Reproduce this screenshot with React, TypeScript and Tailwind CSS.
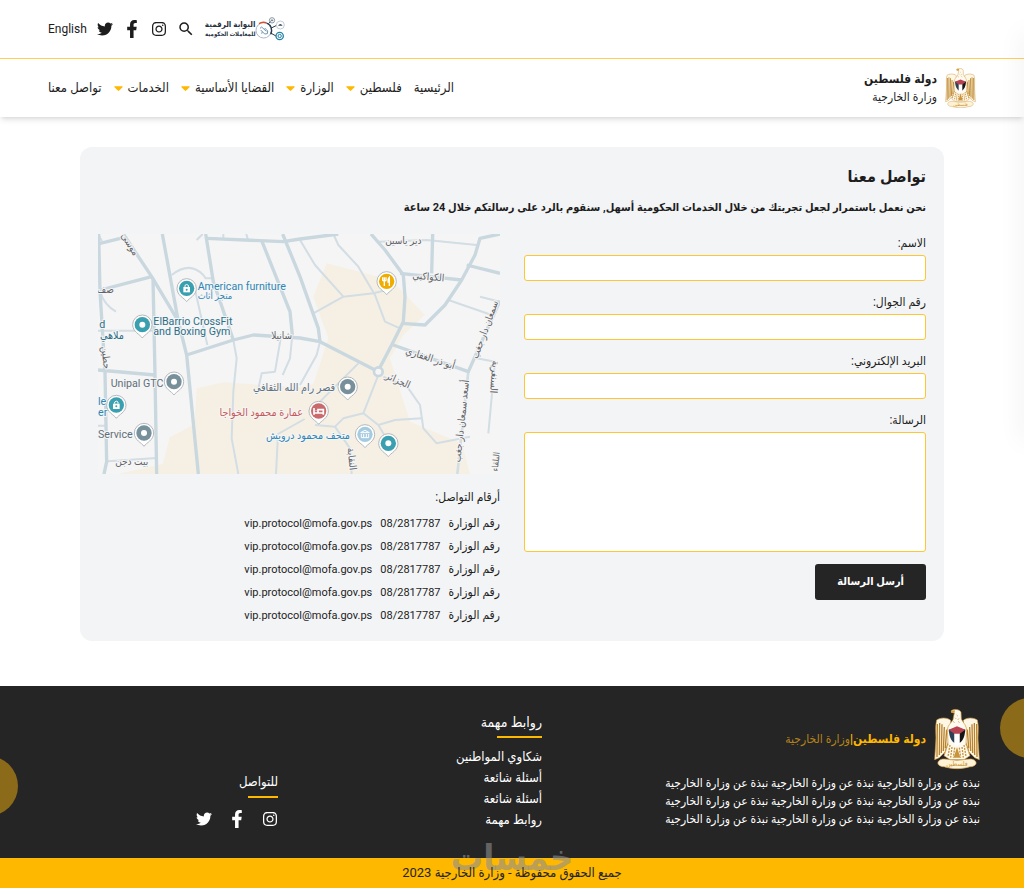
import { FaFacebookF, FaTwitter, FaCaretDown } from "react-icons/fa";
import { FaInstagram } from "react-icons/fa6";
import { MdSearch } from "react-icons/md";

const navLinks = [
  { title: "الرئيسية", menu: false },
  { title: "فلسطين", menu: true },
  { title: "الوزارة", menu: true },
  { title: "القضايا الأساسية", menu: true },
  { title: "الخدمات", menu: true },
  { title: "تواصل معنا", menu: false },
];

const contacts = Array.from({ length: 5 }, () => ({
  title: "رقم الوزارة",
  phone: "08/2817787",
  email: "vip.protocol@mofa.gov.ps",
}));

const footerLinks = ["شكاوي المواطنين", "أسئلة شائعة", "أسئلة شائعة", "روابط مهمة"];

const fields = [
  { id: "name", label: "الاسم:", type: "text" },
  { id: "phone", label: "رقم الجوال:", type: "tel" },
  { id: "email", label: "البريد الإلكتروني:", type: "email" },
];

const Emblem = ({ className }: { className: string }) => (
  <svg viewBox="0 0 138 180" className={className} aria-hidden="true">
    {/* wings */}
    <path
      d="M50 34 C38 24 18 26 8 33 C2 55 8 80 5 105 L2 152 L16 146 L34 128 L44 96 L50 60 Z"
      fill="#fff7e6"
      stroke="#c8943a"
      strokeWidth="2"
    />
    <path
      d="M88 34 C100 24 120 26 130 33 C136 55 130 80 133 105 L136 152 L122 146 L104 128 L94 96 L88 60 Z"
      fill="#fff7e6"
      stroke="#c8943a"
      strokeWidth="2"
    />
    <path
      d="M10 45 L9 144 M17 42 L16 138 M24 46 L22 132 M31 54 L28 126 M38 62 L34 118 M128 45 L129 144 M121 42 L122 138 M114 46 L116 132 M107 54 L110 126 M100 62 L104 118"
      stroke="#b98228"
      strokeWidth="4"
      fill="none"
    />
    {/* head and body */}
    <path
      d="M52 5 C60 -1 78 0 81 10 L82 30 C88 42 98 50 98 64 L96 102 L108 140 L90 152 L48 152 L30 140 L42 102 L40 64 C40 48 52 42 57 32 L61 12 L52 10 Z"
      fill="#fffaf0"
      stroke="#c8943a"
      strokeWidth="2"
    />
    <path d="M52 5 L63 4 L62 11 L52 11 Z" fill="#d99b35" />
    <path d="M68 18 l4 4 m-9 4 l4 4 m8 -2 l-4 5 m-14 4 l5 4 m10 -4 l5 4" stroke="#c8943a" strokeWidth="2" />
    {/* shield */}
    <path d="M44 62 L62 58 L62 102 C52 96 46 84 44 62 Z" fill="#2c4155" />
    <path d="M76 58 L94 62 C92 84 86 96 76 102 Z" fill="#151515" />
    <path d="M61 66 H77 V106 L69 111 L61 106 Z" fill="#fff" />
    <path d="M44 62 L69 52 L94 62 L77 74 H61 Z" fill="#b84350" />
    {/* tail and claws */}
    <path
      d="M42 104 L30 138 M48 108 L42 142 M54 114 L50 146 M96 104 L108 138 M90 108 L96 142 M84 114 L88 146 M62 116 L58 146 M76 116 L80 146"
      stroke="#c8943a"
      strokeWidth="4"
      strokeDasharray="6 3"
    />
    <path d="M69 114 L79 146 H59 Z" fill="#c8943a" />
    <path
      d="M14 156 C24 144 48 154 69 154 C90 154 114 144 124 156 C132 166 118 174 108 173 C82 181 56 181 30 173 C20 174 6 166 14 156 Z"
      fill="#fff2d5"
      stroke="#d0a050"
      strokeWidth="2"
    />
    <text x="69" y="171" textAnchor="middle" fontSize="20" fill="#c8943a">
      فلسطين
    </text>
  </svg>
);

const PortalLogo = () => (
  <a href="#portal" className="flex items-center">
    <svg viewBox="0 0 90 72" className="h-6 w-[30px]" fill="none" aria-hidden="true">
      <circle cx="26" cy="40" r="23" stroke="#a9bac9" strokeWidth="3" />
      <path d="M12 20 A24 24 0 0 1 35 18" stroke="#d8502e" strokeWidth="4" />
      <path d="M35 18 A24 24 0 0 1 47 52" stroke="#26384c" strokeWidth="4" />
      <path d="M15 34 L20 30 L34 43 M17 39 L29 51 L37 50 L38 42 L29 33 M22 44 L20 50" stroke="#6f93ad" strokeWidth="3" />
      <path d="M40 20 L47 14 M49 33 L65 25 M47 48 L63 57" stroke="#26384c" strokeWidth="3" />
      <circle cx="51" cy="10" r="8" stroke="#8a99a6" strokeWidth="3" />
      <path d="M47 10 H55 M51 7 V13" stroke="#44586b" strokeWidth="2" />
      <circle cx="76" cy="24" r="12" stroke="#c5ccd2" strokeWidth="3" />
      <path d="M69 26 Q76 16 83 26 Z" fill="#34495e" />
      <circle cx="74" cy="57" r="11" stroke="#2583a4" strokeWidth="4" />
      <circle cx="74" cy="57" r="5" stroke="#2583a4" strokeWidth="3" />
    </svg>
    <span className="flex flex-col text-[#26323f]">
      <span className="text-[8px] leading-[10px] font-bold">البوابة الرقمية</span>
      <span className="text-[6px] leading-[8px] font-bold">للمعاملات الحكومية</span>
    </span>
  </a>
);

type PinProps = { x: number; y: number; color: string; kind?: "dot" | "bag" | "food" | "bed" | "museum" };

const Pin = ({ x, y, color, kind = "dot" }: PinProps) => (
  <g transform={`translate(${x} ${y})`}>
    <path
      d="M0 38 C-7 27 -29 20 -29 -2 A29 29 0 0 1 29 -2 C29 20 7 27 0 38 Z"
      fill="#fff"
      stroke="#b4b9bd"
      strokeWidth="3"
    />
    <circle cy="-2" r="23" fill={color} />
    {kind === "dot" && <circle cy="-2" r="9" fill="#fff" />}
    {kind === "bag" && (
      <>
        <path d="M-10 -6 H10 V10 H-10 Z" fill="#fff" />
        <path d="M-5 -6 V-11 Q0 -16 5 -11 V-6" fill="none" stroke="#fff" strokeWidth="3" />
        <circle cy="2" r="3" fill={color} />
      </>
    )}
    {kind === "food" && (
      <path d="M-7 -14 V12 M-12 -14 V-5 Q-7 0 -2 -5 V-14 M8 12 V-14 Q2 -8 4 0 H8" stroke="#fff" strokeWidth="4" fill="none" />
    )}
    {kind === "bed" && (
      <path d="M-14 -11 V9 M-14 4 H14 V9 M14 4 V-6 H-2 V2 M-8 -4 v1" stroke="#fff" strokeWidth="5" fill="none" />
    )}
    {kind === "museum" && (
      <path d="M-13 -7 L0 -14 L13 -7 Z M-11 -3 V8 H11 V-3 M-4 -3 V8 M4 -3 V8" stroke="#fff" strokeWidth="3" fill="none" />
    )}
  </g>
);

const Map = () => (
  <svg viewBox="0 0 1206 720" direction="ltr" className="block w-full" role="img" aria-label="خريطة موقع الوزارة">
    <rect width="1206" height="720" fill="#f5f5f5" />
    <path
      d="M686 88 L880 138 L981 243 L916 303 L876 373 L936 563 L1091 628 L1116 720 H60 L195 690 L215 610 L290 570 L296 463 L376 445 L600 460 L646 450 L691 313 L646 188 Z"
      fill="#f6f0e4"
    />
    {/* side streets */}
    <g fill="none" stroke="#d2dde4" strokeWidth="6" strokeLinejoin="round">
      <path d="M221 123 Q275 80 316 123 L323 133 H346" />
      <path d="M288 153 L328 333" />
      <path d="M0 290 H166 M0 575 H22 M30 682 L176 672 M0 0 L12 22 M6 173 Q20 215 54 233" />
      <path d="M314 0 L296 18 M376 0 V15 M445 0 L450 18" />
      <path d="M406 318 L416 373 L406 473 L401 613 L421 720" />
      <path d="M548 313 L531 413 L491 418 L480 470 M583 303 L576 373 L554 423" />
      <path d="M606 18 L651 93 L736 188 L826 178 L866 168" />
      <path d="M706 0 L721 33 L781 98 L831 183 L861 263 L906 283" />
      <path d="M736 188 L646 238 M666 323 L656 363 L606 453" />
      <path d="M841 23 L986 18 L1136 33" />
      <path d="M1051 198 L1181 243 M1146 188 L1206 203 M1136 373 L1191 383 L1171 598" />
      <path d="M841 423 L796 538 L736 553 L711 578 L651 573 M796 538 L841 573 L871 623 M841 573 L891 558 L971 553" />
      <path d="M856 428 L931 463 L966 513 L976 583 L1016 628 L1116 608" />
      <path d="M781 388 L666 503 M711 578 L756 643 L761 720 M620 555 L540 600 L534 720" />
      <path d="M1111 413 L1078 720" strokeWidth="8" />
    </g>
    {/* main streets */}
    <g fill="none" stroke="#c9d7df" strokeWidth="10" strokeLinejoin="round">
      <path d="M76 0 L161 128 L240 260" />
      <path d="M193 0 L241 263 L266 363 L301 720" />
      <path d="M0 30 L76 11 M0 170 L161 128" />
      <path d="M2 0 L6 173 L21 413 L26 683 L18 720" />
      <path d="M165 133 L171 423 L176 720" />
      <path d="M0 408 L171 423" />
      <path d="M323 0 L346 143 L406 318" />
      <path d="M326 13 L556 23 L606 15 L721 0" />
      <path d="M266 363 L406 318 L466 303 L606 312 L666 323 L831 408" />
      <path d="M491 20 L576 233 L583 303" />
      <path d="M554 0 L606 128 L661 283 L666 323" />
      <path d="M819 0 L861 48 L916 123 L921 188 L916 263 L881 333 L846 400" />
      <path d="M1004 0 L1001 118 M906 118 L1091 138" />
      <path d="M1206 0 L1146 13 L1131 63 L1091 138 L1041 213 L981 273 L911 268" />
      <path d="M1106 93 L1206 118 M886 333 L1111 413 L1206 200" />
      <circle cx="841" cy="413" r="13" fill="#f5f5f5" strokeWidth="8" />
    </g>
    <g
      fontSize="30"
      fill="#5f6368"
      stroke="#f5f5f5"
      strokeWidth="6"
      paintOrder="stroke"
      textAnchor="middle"
    >
      <text transform="translate(88 36) rotate(58)">موسى</text>
      <text x="22" y="178">صف</text>
      <text transform="translate(14 372) rotate(84)">حطين</text>
      <text x="101" y="692">بيت دجن</text>
      <text x="551" y="314">شانيلا</text>
      <text x="916" y="30">دير ياسين</text>
      <text transform="translate(990 138) rotate(5)">الكواكبي</text>
      <text transform="translate(994 382) rotate(18)">أبو ذر الغفاري</text>
      <text transform="translate(896 448) rotate(24)">الجزائر</text>
      <text transform="translate(1170 290) rotate(-70)">سمعان دار جغب</text>
      <text transform="translate(1100 562) rotate(-84)">أسعد سمعان دار جغب</text>
      <text transform="translate(1180 428) rotate(94)">السنغرية</text>
      <text transform="translate(752 676) rotate(84)">النقابة</text>
      <text transform="translate(1202 684) rotate(-84)" fontSize="26">
        البلقاء
      </text>
    </g>
    <g fontSize="32" stroke="#f5f5f5" strokeWidth="6" paintOrder="stroke">
      <g fill="#2f86b5">
        <text x="299" y="168">American furniture</text>
        <text x="299" y="195" fontSize="28">متجر أثاث</text>
        <text x="0" y="513">le</text>
        <text x="0" y="545">er</text>
        <text x="630" y="615" textAnchor="middle">متحف محمود درويش</text>
      </g>
      <g fill="#2d6f88">
        <text x="166" y="272">ElBarrio CrossFit</text>
        <text x="166" y="304">and Boxing Gym</text>
        <text x="4" y="283">d</text>
        <text x="42" y="316" textAnchor="middle">ملاهي</text>
      </g>
      <g fill="#5f6f7a">
        <text x="38" y="458">Unipal GTC</text>
        <text x="0" y="611">Service</text>
        <text x="588" y="470" textAnchor="middle">قصر رام الله الثقافي</text>
      </g>
      <text x="490" y="546" textAnchor="middle" fill="#c55a5a">
        عمارة محمود الخواجا
      </text>
    </g>
    <Pin x={266} y={165} color="#3a9fae" kind="bag" />
    <Pin x={133} y={274} color="#3a9fae" />
    <Pin x={228} y={445} color="#78909c" />
    <Pin x={55} y={515} color="#3a9fae" kind="bag" />
    <Pin x={138} y={599} color="#78909c" />
    <Pin x={866} y={144} color="#f0ac00" kind="food" />
    <Pin x={749} y={460} color="#78909c" />
    <Pin x={662} y={533} color="#c96b6d" kind="bed" />
    <Pin x={801} y={603} color="#a5cbe0" kind="museum" />
    <Pin x={871} y={630} color="#3a9fae" />
  </svg>
);

const Header = () => (
  <header className="shadow-md">
    <div className="flex h-[59px] items-center justify-end gap-[10px] border-b border-[#ffcf55] px-12">
      <PortalLogo />
      <button type="button" aria-label="بحث">
        <MdSearch className="size-[18px]" />
      </button>
      <a href="#instagram" aria-label="Instagram">
        <FaInstagram className="size-4" />
      </a>
      <a href="#facebook" aria-label="Facebook">
        <FaFacebookF className="size-[18px]" />
      </a>
      <a href="#twitter" aria-label="Twitter">
        <FaTwitter className="size-4" />
      </a>
      <a href="#en" className="text-xs">
        English
      </a>
    </div>

    <div className="flex h-[58px] items-center justify-between px-12">
      <a href="#home" className="flex items-center gap-2">
        <Emblem className="h-10 w-[31px]" />
        <span className="flex flex-col text-xs leading-[18px]">
          <strong>دولة فلسطين</strong>
          <span>وزارة الخارجية</span>
        </span>
      </a>
      <nav className="flex items-center gap-3 text-[13px]">
        {navLinks.map((link) => (
          <a key={link.title} href="#nav" className="flex items-center gap-[5px]">
            {link.title}
            {link.menu && <FaCaretDown className="h-4 w-[9px] text-[#ffb800]" />}
          </a>
        ))}
      </nav>
    </div>
  </header>
);

const ContactForm = () => (
  <form className="flex flex-col">
    {fields.map((field) => (
      <div key={field.id} className="mb-3 flex flex-col">
        <label htmlFor={field.id} className="mb-[3px] text-xs leading-[18px]">
          {field.label}
        </label>
        <input
          id={field.id}
          type={field.type}
          className="h-[26px] rounded-[3px] border border-[#ffc633] bg-white px-2 text-xs"
        />
      </div>
    ))}
    <label htmlFor="message" className="mb-[3px] text-xs leading-[18px]">
      الرسالة:
    </label>
    <textarea
      id="message"
      className="h-[120px] resize-none rounded-[3px] border border-[#ffc633] bg-white p-2 text-xs"
    />
    <button
      type="button"
      className="mt-3 h-9 self-start rounded-[3px] bg-[#252525] px-[22px] text-[11px] font-semibold text-white"
    >
      أرسل الرسالة
    </button>
  </form>
);

const Footer = () => (
  <footer className="relative overflow-hidden bg-[#252525] text-white">
    <div className="absolute top-3 -right-9 size-15 rounded-full bg-[#8b6a1a]" />
    <div className="absolute top-[70px] -left-[42px] size-15 rounded-full bg-[#8b6a1a]" />

    <div className="grid h-[172px] grid-cols-[438fr_264fr_234fr] px-11">
      <div className="pt-[22px]">
        <div className="flex items-center gap-2">
          <Emblem className="h-[62px] w-[46px]" />
          <p className="text-xs text-[#ffb800]">
            <strong>دولة فلسطين|</strong>
            <span className="text-[#b5831b]">وزارة الخارجية</span>
          </p>
        </div>
        <p className="mt-1 max-w-[330px] text-xs leading-[18px]">
          نبذة عن وزارة الخارجية نبذة عن وزارة الخارجية نبذة عن وزارة الخارجية
          <br />
          نبذة عن وزارة الخارجية نبذة عن وزارة الخارجية نبذة عن وزارة الخارجية
          <br />
          نبذة عن وزارة الخارجية نبذة عن وزارة الخارجية نبذة عن وزارة الخارجية
        </p>
      </div>

      <div className="pt-[26px]">
        <h2 className="text-sm leading-5">روابط مهمة</h2>
        <div className="mt-1 h-0.5 w-[45px] bg-[#ffb800]" />
        <ul className="mt-2 text-[13px] leading-[21px]">
          {footerLinks.map((title, i) => (
            <li key={i}>
              <a href="#link">{title}</a>
            </li>
          ))}
        </ul>
      </div>

      <div className="pt-[86px]">
        <h2 className="text-[13px] leading-5">للتواصل</h2>
        <div className="mt-1 h-0.5 w-[30px] bg-[#ffb800]" />
        <div className="mt-3 flex items-center gap-4">
          <a href="#instagram" aria-label="Instagram">
            <FaInstagram className="size-4" />
          </a>
          <a href="#facebook" aria-label="Facebook">
            <FaFacebookF className="size-[18px]" />
          </a>
          <a href="#twitter" aria-label="Twitter">
            <FaTwitter className="size-4" />
          </a>
        </div>
      </div>
    </div>

    <span className="absolute bottom-3 left-1/2 -translate-x-1/2 text-4xl leading-9 font-bold text-[#8e8e8e]/60">
      خمسات
    </span>
    <div className="flex h-[30px] items-center justify-center bg-[#ffb800] text-[13px] text-[#252525]">
      <span className="relative">جميع الحقوق محفوظة - وزارة الخارجية 2023</span>
    </div>
  </footer>
);

const App = () => {
  return (
    <div
      dir="rtl"
      className="relative flex min-h-screen flex-col overflow-hidden bg-white font-[Roboto,'DejaVu_Sans_Condensed','DejaVu_Sans',sans-serif] text-[#1d1d1d]"
    >
      <div className="absolute top-8 -right-2 h-[410px] w-2 shadow-[0_0_24px_rgba(0,0,0,0.1)]" />
      <Header />

      <main className="mx-20 mt-[30px] mb-[45px] rounded-xl bg-[#f3f4f6] px-[18px] pt-[18px] pb-[14px]">
        <h1 className="text-base leading-6 font-bold">تواصل معنا</h1>
        <p className="mt-2 text-[11px] leading-[22px] font-bold">
          نحن نعمل باستمرار لجعل تجربتك من خلال الخدمات الحكومية أسهل, سنقوم بالرد على رسالتكم خلال 24 ساعة
        </p>

        <div className="mt-[15px] grid grid-cols-2 gap-6">
          <ContactForm />
          <div>
            <Map />
            <h2 className="mt-3 text-xs leading-[22px]">أرقام التواصل:</h2>
            <table className="mt-1 text-[11px] leading-[23px]">
              <tbody>
                {contacts.map((contact, i) => (
                  <tr key={i} className="align-baseline">
                    <td className="pl-2 text-xs leading-[23px]">{contact.title}</td>
                    <td className="pl-2">{contact.phone}</td>
                    <td>{contact.email}</td>
                  </tr>
                ))}
              </tbody>
            </table>
          </div>
        </div>
      </main>

      <Footer />
    </div>
  );
};

export default App;
